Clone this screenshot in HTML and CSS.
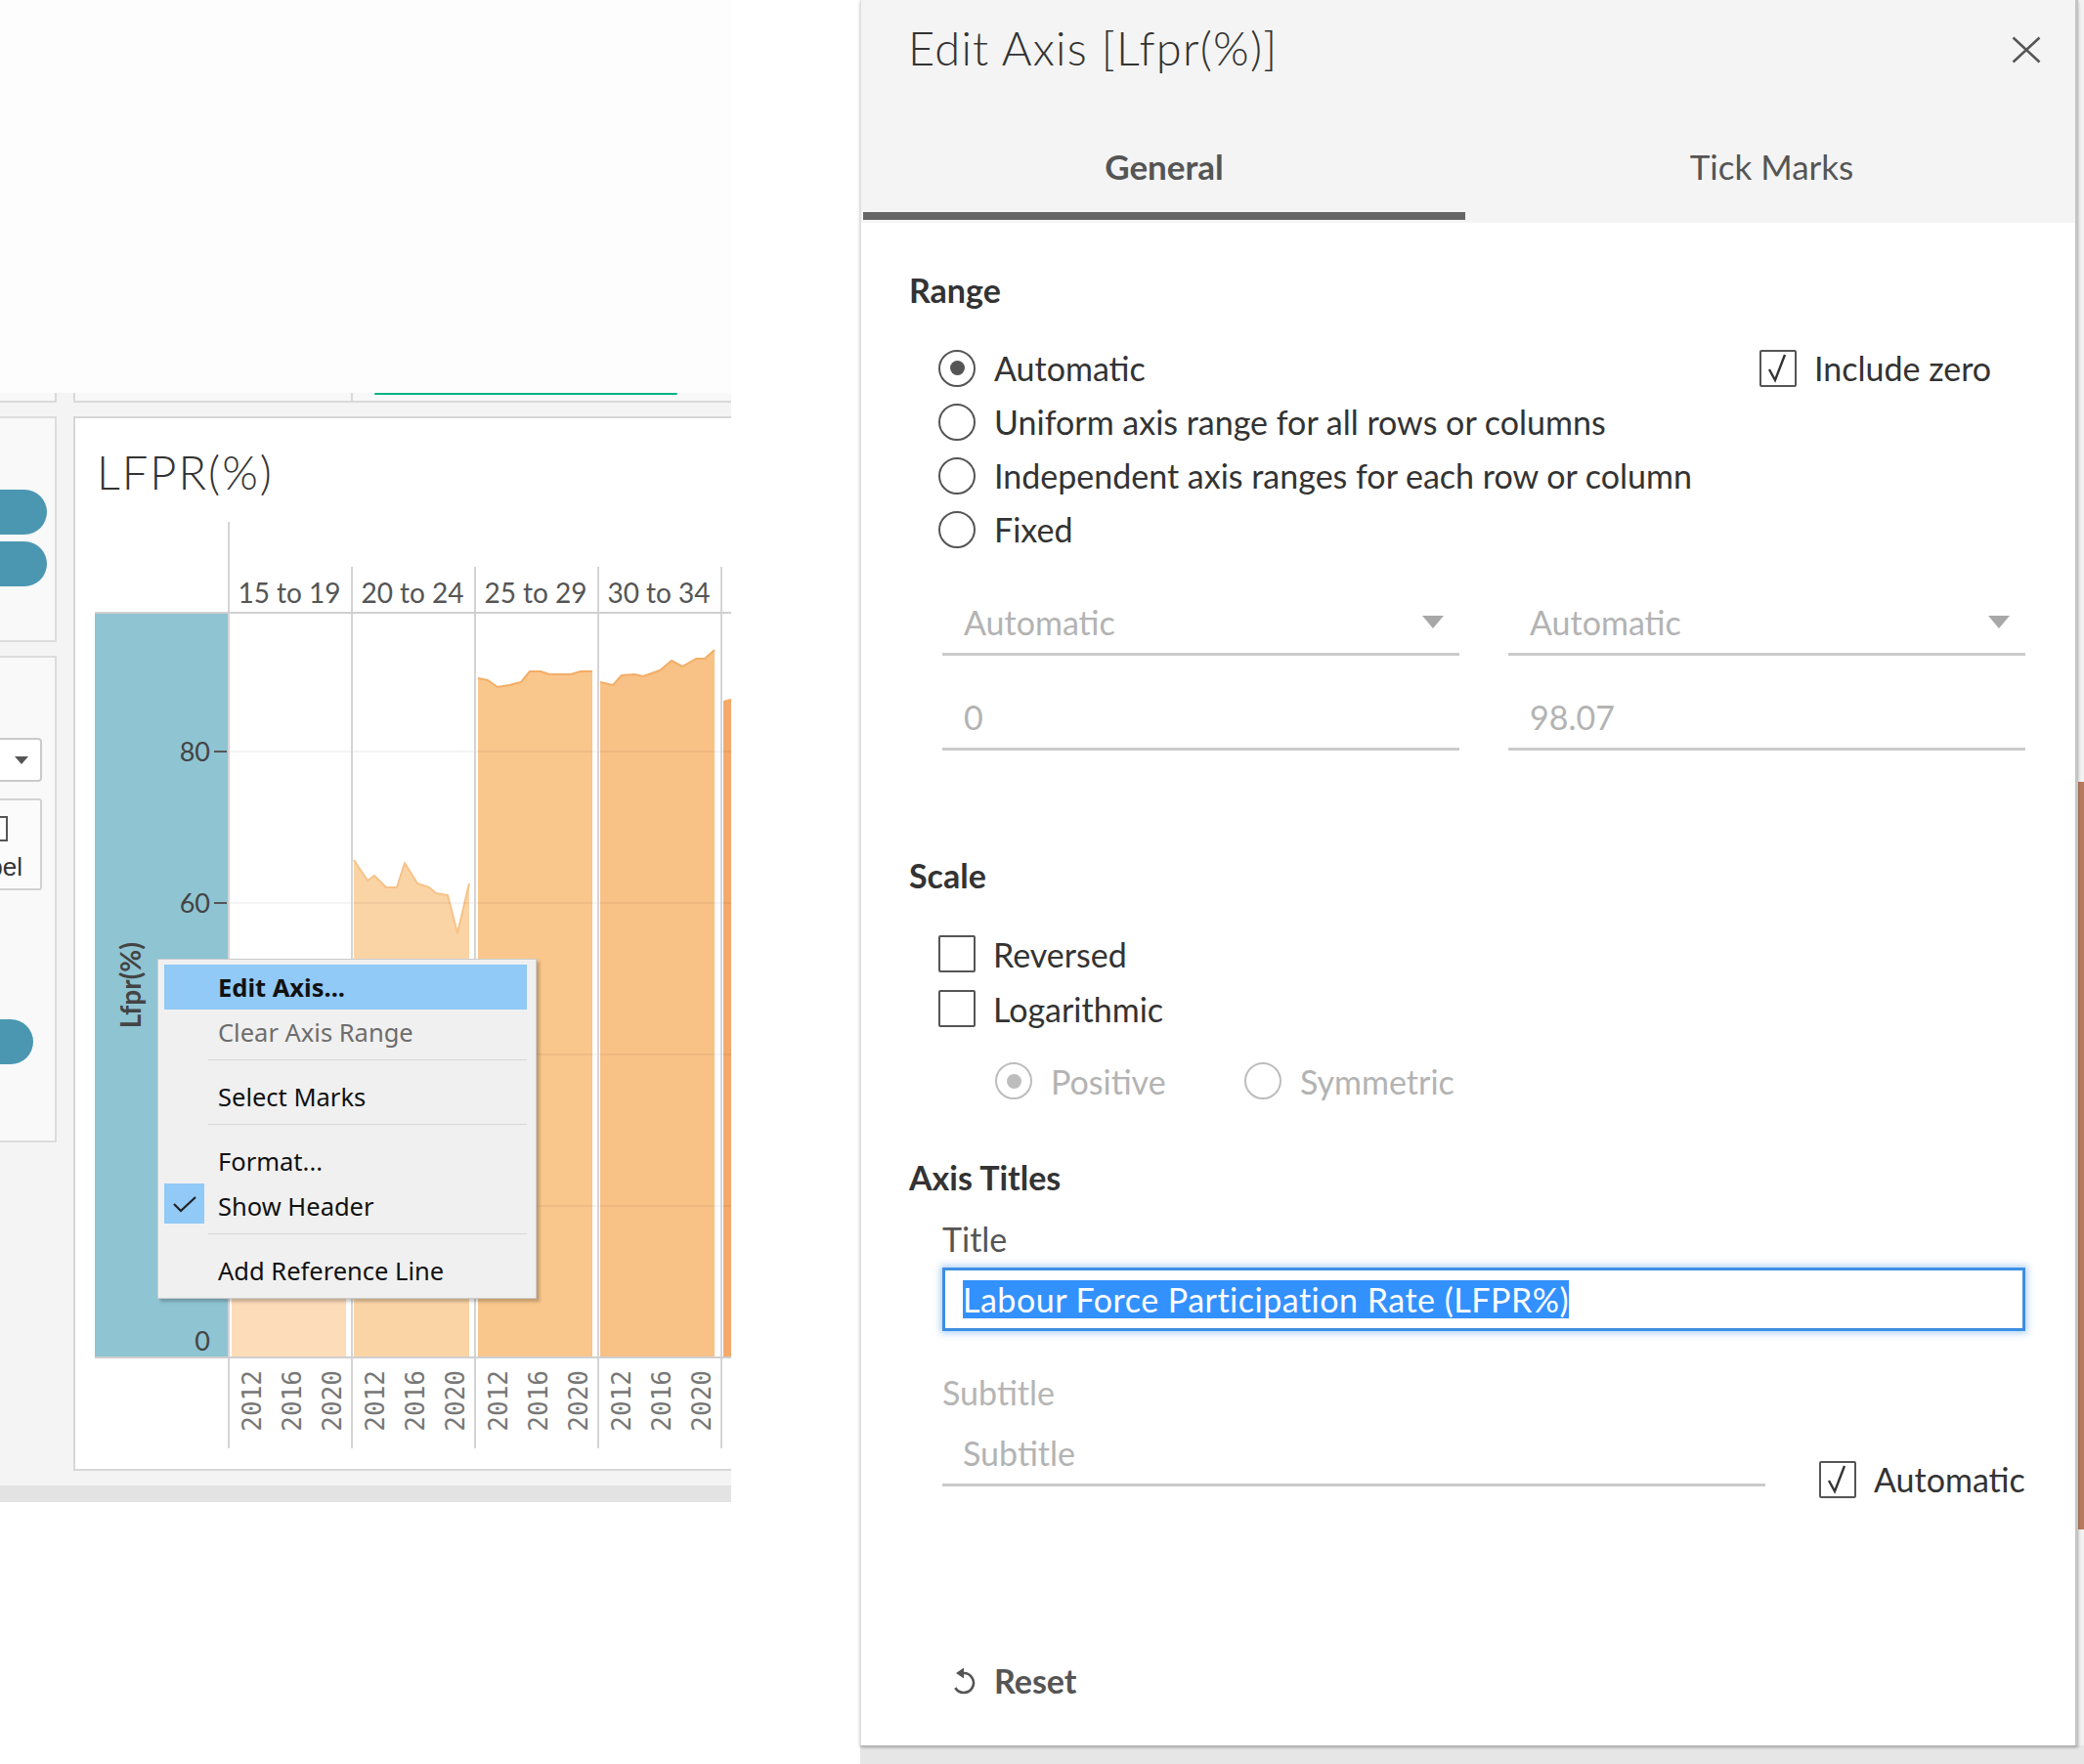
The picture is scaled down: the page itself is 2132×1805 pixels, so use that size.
FILE: index.html
```html
<!DOCTYPE html>
<html>
<head>
<meta charset="utf-8">
<title>Edit Axis</title>
<link rel="stylesheet" href="styles.css">
</head>
<body>
<div class="page">
  <div class="dash">
    <div class="dash-top"></div>
    <div class="top-cards">
      <div class="tc-a"></div>
      <div class="tc-b">
        <div class="tc-b1"></div>
        <div class="tc-b2"><div class="green-line"></div></div>
      </div>
    </div>
    <div class="dash-main">
      <div class="sidebar">
        <div class="side-card sc1">
          <div class="pill"></div>
          <div class="pill"></div>
        </div>
        <div class="side-card sc2">
          <div class="mini-dd"><span class="mini-caret"></span></div>
          <div class="mini-box">
            <div class="mini-cb"></div>
            <div class="mini-label">Label</div>
          </div>
          <div class="pill pill-short"></div>
        </div>
      </div>
      <div class="chart-panel">
        <div class="chart-title">LFPR(%)</div>
        <div class="chart-grid">
          <div class="h-axis"></div>
          <div class="h-col first"><span>15 to 19</span></div>
          <div class="h-col"><span>20 to 24</span></div>
          <div class="h-col"><span>25 to 29</span></div>
          <div class="h-col"><span>30 to 34</span></div>
          <div class="h-col"></div>

          <div class="p-axis">
            <div class="axis-title">Lfpr(%)</div>
            <div class="ticks">
              <div class="tick" style="top:141px"><span>80</span><i></i></div>
              <div class="tick" style="top:296px"><span>60</span><i></i></div>
              <div class="tick" style="top:451px"><span>40</span><i></i></div>
              <div class="tick" style="top:606px"><span>20</span><i></i></div>
              <div class="tick zero" style="top:742px"><span>0</span><i></i></div>
            </div>
          </div>
          <div class="p-col">
            <svg viewBox="0 0 124 760" preserveAspectRatio="none">
              <polygon class="a1" points="2,566 20,562 40,560 60,556 80,558 100,552 119,548 119,760 2,760"/>
              <polyline class="s1" points="2,566 20,562 40,560 60,556 80,558 100,552 119,548"/>
              <g class="grid"><line x1="0" y1="141" x2="124" y2="141"/><line x1="0" y1="296" x2="124" y2="296"/><line x1="0" y1="451" x2="124" y2="451"/><line x1="0" y1="606" x2="124" y2="606"/></g>
            </svg>
          </div>
          <div class="p-col">
            <svg viewBox="0 0 124 760" preserveAspectRatio="none">
              <polygon class="a2" points="1,252 15,273 22,268 34,280 45,280 53,255 66,276 78,280 85,286 97,288 107,327 119,276 119,760 1,760"/>
              <polyline class="s2" points="1,252 15,273 22,268 34,280 45,280 53,255 66,276 78,280 85,286 97,288 107,327 119,276"/>
              <g class="grid"><line x1="0" y1="141" x2="124" y2="141"/><line x1="0" y1="296" x2="124" y2="296"/><line x1="0" y1="451" x2="124" y2="451"/><line x1="0" y1="606" x2="124" y2="606"/></g>
            </svg>
          </div>
          <div class="p-col">
            <svg viewBox="0 0 124 760" preserveAspectRatio="none">
              <polygon class="a3" points="2,66 12,68 22,75 34,73 46,70 55,59 66,59 75,62 97,62 107,59 119,59 119,760 2,760"/>
              <polyline class="s3" points="2,66 12,68 22,75 34,73 46,70 55,59 66,59 75,62 97,62 107,59 119,59"/>
              <g class="grid"><line x1="0" y1="141" x2="124" y2="141"/><line x1="0" y1="296" x2="124" y2="296"/><line x1="0" y1="451" x2="124" y2="451"/><line x1="0" y1="606" x2="124" y2="606"/></g>
            </svg>
          </div>
          <div class="p-col">
            <svg viewBox="0 0 124 760" preserveAspectRatio="none">
              <polygon class="a4" points="1,70 14,73 23,63 36,62 45,64 62,58 74,48 85,54 99,46 108,46 118,37 118,760 1,760"/>
              <polyline class="s4" points="1,70 14,73 23,63 36,62 45,64 62,58 74,48 85,54 99,46 108,46 118,37"/>
              <g class="grid"><line x1="0" y1="141" x2="124" y2="141"/><line x1="0" y1="296" x2="124" y2="296"/><line x1="0" y1="451" x2="124" y2="451"/><line x1="0" y1="606" x2="124" y2="606"/></g>
            </svg>
          </div>
          <div class="p-col">
            <svg viewBox="0 0 124 760" preserveAspectRatio="none">
              <polygon class="a5" points="1,89 12,86 60,82 119,80 119,760 1,760"/>
              <g class="grid"><line x1="0" y1="141" x2="124" y2="141"/><line x1="0" y1="296" x2="124" y2="296"/><line x1="0" y1="451" x2="124" y2="451"/><line x1="0" y1="606" x2="124" y2="606"/></g>
            </svg>
          </div>

          <div class="y-axis"></div>
          <div class="y-col"><span>2012</span><span>2016</span><span>2020</span></div>
          <div class="y-col"><span>2012</span><span>2016</span><span>2020</span></div>
          <div class="y-col"><span>2012</span><span>2016</span><span>2020</span></div>
          <div class="y-col"><span>2012</span><span>2016</span><span>2020</span></div>
          <div class="y-col"></div>
        </div>

        <div class="ctx-menu">
          <div class="mi hl"><span class="gut"></span>Edit Axis...</div>
          <div class="mi dis"><span class="gut"></span>Clear Axis Range</div>
          <div class="sep"></div>
          <div class="mi"><span class="gut"></span>Select Marks</div>
          <div class="sep"></div>
          <div class="mi"><span class="gut"></span>Format...</div>
          <div class="mi"><span class="gut on"><svg viewBox="0 0 41 41"><path d="M10 21 L17 28 L32 14"/></svg></span>Show Header</div>
          <div class="sep"></div>
          <div class="mi"><span class="gut"></span>Add Reference Line</div>
        </div>
      </div>
    </div>
    <div class="dash-band"></div>
  </div>

  <div class="gap"></div>

  <div class="right">
    <div class="dlg-row">
      <div class="dialog">
        <div class="dlg-head">
          <div class="dlg-titlebar">
            <div class="dlg-title">Edit Axis [Lfpr(%)]</div>
            <svg class="close" viewBox="0 0 30 28"><path d="M1.5 1.5 L28.5 26.5 M28.5 1.5 L1.5 26.5"/></svg>
          </div>
          <div class="tabs">
            <div class="tab active">General</div>
            <div class="tab">Tick Marks</div>
          </div>
        </div>

        <div class="dlg-body">
          <div class="sec-h h-range">Range</div>
          <div class="opts">
            <div class="opt-row first">
              <div class="opt w840"><span class="radio on"></span>Automatic</div>
              <div class="opt"><span class="cbox"><svg viewBox="0 0 34 34"><path d="M8 18 L14 29 L24 3"/></svg></span>Include zero</div>
            </div>
            <div class="opt-row"><div class="opt"><span class="radio"></span>Uniform axis range for all rows or columns</div></div>
            <div class="opt-row"><div class="opt"><span class="radio"></span>Independent axis ranges for each row or column</div></div>
            <div class="opt-row"><div class="opt"><span class="radio"></span>Fixed</div></div>
          </div>

          <div class="fields">
            <div class="field dd"><span>Automatic</span><i class="dd-caret"></i></div>
            <div class="field dd"><span>Automatic</span><i class="dd-caret"></i></div>
            <div class="field"><span>0</span></div>
            <div class="field"><span>98.07</span></div>
          </div>

          <div class="sec-h h-scale">Scale</div>
          <div class="checks">
            <div class="opt-row chk"><div class="opt"><span class="cbox"></span>Reversed</div></div>
            <div class="opt-row chk"><div class="opt"><span class="cbox"></span>Logarithmic</div></div>
          </div>
          <div class="log-opts">
            <div class="opt dis w255"><span class="radio on"></span>Positive</div>
            <div class="opt dis"><span class="radio"></span>Symmetric</div>
          </div>

          <div class="sec-h h-titles">Axis Titles</div>
          <div class="lbl lbl-title">Title</div>
          <div class="title-input"><span class="sel">Labour Force Participation Rate (LFPR%)</span></div>
          <div class="lbl lbl-sub">Subtitle</div>
          <div class="sub-row">
            <div class="field sub-input"><span>Subtitle</span></div>
            <div class="opt auto-check"><span class="cbox"><svg viewBox="0 0 34 34"><path d="M8 18 L14 29 L24 3"/></svg></span>Automatic</div>
          </div>

          <div class="reset">
            <svg class="reset-ico" viewBox="0 0 24 32"><path class="arc" d="M12 9 A10 10 0 1 1 3.3 24"/><polygon points="4,9 12,3.5 12,14.5"/></svg>
            <span>Reset</span>
          </div>
        </div>
      </div>
      <div class="sliver"></div>
    </div>
    <div class="under"></div>
  </div>
</div>
</body>
</html>
```

FILE: styles.css
```css
* { box-sizing: border-box; }

body {
  margin: 0;
  width: 2132px;
  height: 1805px;
  overflow: hidden;
  background: #fff;
  font-family: "Lato", "Open Sans", sans-serif;
  color: #333;
}

.page {
  display: flex;
  height: 1805px;
}

/* ---------- left dashboard ---------- */
.dash {
  width: 748px;
  flex: none;
  display: flex;
  flex-direction: column;
  background: #fff;
}

.dash-top {
  height: 402px;
  background: #fdfdfd;
}

.top-cards {
  height: 10px;
  display: flex;
  background: #f4f4f4;
}

.tc-a {
  width: 58px;
  background: #f8f8f8;
  border-right: 2px solid #d9d9d9;
  border-bottom: 2px solid #d9d9d9;
}

.tc-b {
  margin-left: 17px;
  flex: 1;
  display: flex;
  background: #f8f8f8;
  border-left: 2px solid #d9d9d9;
  border-bottom: 2px solid #d9d9d9;
}

.tc-b1 {
  width: 284px;
  border-right: 2px solid #d9d9d9;
}

.tc-b2 { flex: 1; }

.green-line {
  margin-left: 22px;
  width: 310px;
  height: 2px;
  border-radius: 1px;
  background: #00b386;
}

.dash-main {
  height: 1108px;
  background: #f4f4f4;
  display: flex;
  padding: 14px 0 15px;
}

.sidebar {
  width: 58px;
  flex: none;
  display: flex;
  flex-direction: column;
  gap: 14px;
}

.side-card {
  background: #f9f9f9;
  border: 2px solid #dcdcdc;
  border-left: none;
  overflow: hidden;
}

.sc1 {
  height: 231px;
  padding-top: 73px;
  display: flex;
  flex-direction: column;
  gap: 7px;
}

.pill {
  width: 88px;
  height: 46px;
  margin-left: -40px;
  border-radius: 23px;
  background: #4b97b2;
  flex: none;
}

.pill-short {
  margin-left: -54px;
  margin-top: 132px;
}

.sc2 {
  height: 498px;
  padding-top: 82px;
  display: flex;
  flex-direction: column;
}

.mini-dd {
  width: 45px;
  height: 45px;
  margin-left: -2px;
  background: #fff;
  border: 2px solid #cacaca;
  border-radius: 0 4px 4px 0;
  display: flex;
  align-items: center;
  justify-content: center;
  padding-left: 2px;
}

.mini-caret {
  width: 0;
  height: 0;
  border-top: 8px solid #555;
  border-left: 7px solid transparent;
  border-right: 7px solid transparent;
}

.mini-box {
  width: 45px;
  height: 94px;
  margin-left: -2px;
  margin-top: 17px;
  background: #fbfbfb;
  border: 2px solid #d2d2d2;
  border-radius: 0 3px 3px 0;
  overflow: hidden;
}

.mini-cb {
  width: 22px;
  height: 26px;
  margin-left: -14px;
  margin-top: 16px;
  border: 2px solid #555;
  background: #fff;
}

.mini-label {
  margin-top: 13px;
  margin-left: -60px;
  width: 83px;
  text-align: right;
  font-family: "Liberation Sans", sans-serif;
  font-size: 26px;
  line-height: 26px;
  color: #333;
}

.dash-band {
  height: 17px;
  background: #e3e3e3;
}

/* ---------- chart panel ---------- */
.chart-panel {
  margin-left: 17px;
  flex: 1;
  background: #fff;
  border: 2px solid #d6d6d6;
  border-right: none;
  position: relative;
  overflow: hidden;
  padding-left: 20px;
}

.chart-title {
  margin-top: 27px;
  margin-left: 2px;
  font-size: 47px;
  font-weight: 300;
  letter-spacing: 2px;
  line-height: 56px;
  color: #333;
  white-space: nowrap;
}

.chart-grid {
  margin-top: 25px;
  display: grid;
  grid-template-columns: 136px repeat(5, 126px);
  grid-template-rows: 92px 762px 92px;
}

.h-axis {
  border-bottom: 2px solid #cfcfcf;
}

.h-col {
  position: relative;
  border-bottom: 2px solid #cfcfcf;
  display: flex;
  align-items: flex-end;
  justify-content: center;
  padding-bottom: 5px;
  font-size: 28px;
  line-height: 30px;
  color: #555;
  white-space: nowrap;
}

.h-col::before {
  content: "";
  position: absolute;
  left: 0;
  bottom: 0;
  width: 2px;
  height: 46px;
  background: #d4d4d4;
}

.h-col.first::before { height: 92px; }

.p-axis {
  background: #8fc4d3;
  border-bottom: 2px solid #cfcfcf;
  display: flex;
  align-items: center;
  padding-left: 21px;
}

.axis-title {
  writing-mode: vertical-rl;
  transform: rotate(180deg);
  font-size: 28px;
  font-weight: 700;
  line-height: 30px;
  color: #444;
  white-space: nowrap;
}

.ticks {
  position: relative;
  flex: 1;
  align-self: stretch;
}

.tick {
  position: absolute;
  right: 1px;
  transform: translateY(-50%);
  display: flex;
  align-items: center;
  gap: 4px;
  font-size: 27px;
  line-height: 30px;
  color: #444;
}

.tick i {
  display: block;
  width: 13px;
  height: 2px;
  background: #555;
}

.tick.zero { margin-top: 2px; }
.tick.zero i { visibility: hidden; }

.p-col {
  border-left: 2px solid #d4d4d4;
  border-bottom: 2px solid #cfcfcf;
}

.p-col svg {
  display: block;
  width: 124px;
  height: 760px;
}

.a1 { fill: #fddcb9; }
.a2 { fill: #fbd4a6; }
.a3 { fill: #f9c68c; }
.a4 { fill: #f8c186; }
.a5 { fill: #f5a96b; }

.s1, .s2, .s3, .s4 {
  fill: none;
  stroke-width: 2;
  stroke-linejoin: round;
}
.s1 { stroke: #fbcd9c; }
.s2 { stroke: #f8c287; }
.s3, .s4 { stroke: #f3ae66; }

.grid line {
  stroke: rgba(0, 0, 0, 0.06);
  stroke-width: 1.5;
}

.y-col {
  border-left: 2px solid #d4d4d4;
  display: flex;
  gap: 19px;
  padding: 12px 0 0 12px;
  align-items: flex-start;
}

.y-col span {
  writing-mode: vertical-rl;
  transform: rotate(180deg);
  font-family: "DejaVu Sans Mono", monospace;
  font-size: 26px;
  line-height: 22px;
  color: #777;
}

/* ---------- context menu ---------- */
.ctx-menu {
  position: absolute;
  left: 84px;
  top: 553px;
  width: 388px;
  background: #f0f0f0;
  border: 1px solid #cbcbcb;
  box-shadow: 3px 3px 3px rgba(0, 0, 0, 0.22);
  padding: 5px 0 5px;
  font-family: "Noto Sans", "Open Sans", sans-serif;
  font-size: 25.5px;
  color: #111;
}

.mi {
  height: 46px;
  margin: 0 9px 0 6px;
  display: flex;
  align-items: center;
  white-space: nowrap;
}

.mi.hl {
  background: #91c9f7;
  font-weight: 700;
}

.mi.dis { color: #6d6d6d; }

.gut {
  width: 41px;
  height: 41px;
  margin-right: 14px;
  align-self: flex-start;
  flex: none;
}

.gut.on { background: #91c9f7; }

.gut svg {
  display: block;
  width: 41px;
  height: 41px;
}

.gut path {
  fill: none;
  stroke: #222;
  stroke-width: 2.2;
}

.sep {
  height: 1px;
  background: #d7d7d7;
  margin: 5px 9px 14px 51px;
}

/* ---------- right side / dialog ---------- */
.gap {
  width: 132px;
  flex: none;
  background: #fff;
}

.right {
  flex: 1;
  display: flex;
  flex-direction: column;
}

.dlg-row {
  height: 1786px;
  display: flex;
  flex: none;
}

.dialog {
  flex: 1;
  background: #fff;
  border-left: 1px solid #e0e0e0;
  border-right: 3px solid #c4c4c4;
  box-shadow: 0 2px 3px rgba(0, 0, 0, 0.3);
  display: flex;
  flex-direction: column;
  position: relative;
  z-index: 1;
}

.sliver {
  width: 6px;
  flex: none;
  background: linear-gradient(to bottom, #f2f2f2 0, #f2f2f2 800px, #b97b5d 800px, #b97b5d 1565px, #f2f2f2 1565px);
}

.under {
  flex: 1;
  background: #e6e6e6;
}

.dlg-head {
  height: 228px;
  background: #f4f4f4;
  display: flex;
  flex-direction: column;
}

.dlg-titlebar {
  display: flex;
  justify-content: space-between;
  align-items: flex-start;
  padding: 21px 35px 0 48px;
}

.dlg-title {
  font-size: 47px;
  font-weight: 300;
  letter-spacing: 1.2px;
  line-height: 56px;
  color: #333;
  white-space: nowrap;
}

.close {
  width: 30px;
  height: 28px;
  margin-top: 16px;
}

.close path {
  stroke: #555;
  stroke-width: 2.5;
  fill: none;
}

.tabs {
  margin-top: auto;
  margin-bottom: 3px;
  display: grid;
  grid-template-columns: 1fr 1fr;
}

.tab {
  height: 85px;
  padding-top: 12px;
  text-align: center;
  font-size: 35px;
  line-height: 36px;
  color: #555;
  border-bottom: 8px solid transparent;
}

.tab.active {
  font-weight: 700;
  border-bottom-color: #666;
  margin: 0 3px 0 2px;
}

.dlg-body {
  padding: 0 51px 0 49px;
  display: flex;
  flex-direction: column;
}

.sec-h {
  height: 40px;
  line-height: 40px;
  font-size: 34px;
  font-weight: 700;
  color: #333;
}

.h-range { margin-top: 49px; }
.h-scale { margin-top: 108px; }
.h-titles { margin-top: 51px; }

.opts {
  margin-top: 32px;
  padding-left: 30px;
}

.opt-row {
  height: 55px;
  display: flex;
  align-items: center;
}

.opt-row.chk { height: 56px; }

.opt {
  display: flex;
  align-items: center;
  font-size: 34px;
  color: #333;
  white-space: nowrap;
}

.w840 { width: 840px; flex: none; }
.w255 { width: 255px; flex: none; }

.radio {
  width: 38px;
  height: 38px;
  border: 2.5px solid #555;
  border-radius: 50%;
  margin-right: 19px;
  display: flex;
  align-items: center;
  justify-content: center;
  flex: none;
}

.radio.on::after {
  content: "";
  width: 15px;
  height: 15px;
  border-radius: 50%;
  background: #555;
}

.cbox {
  width: 38px;
  height: 38px;
  border: 2px solid #555;
  border-radius: 2px;
  margin-right: 18px;
  flex: none;
}

.cbox svg {
  display: block;
  width: 34px;
  height: 34px;
}

.cbox path {
  fill: none;
  stroke: #333;
  stroke-width: 2.4;
  stroke-linejoin: miter;
}

.opt.dis { color: #b3b3b3; }
.opt.dis .radio { border-color: #bdbdbd; }
.opt.dis .radio.on::after { background: #bdbdbd; }

.fields {
  margin-top: 36px;
  margin-left: 34px;
  display: grid;
  grid-template-columns: 1fr 1fr;
  column-gap: 50px;
  row-gap: 31px;
}

.field {
  height: 66px;
  border-bottom: 3px solid #cbcbcb;
  padding-left: 22px;
  display: flex;
  align-items: center;
  font-size: 34px;
  color: #b3b3b3;
}

.field.dd {
  justify-content: space-between;
  padding-right: 16px;
}

.dd-caret {
  width: 0;
  height: 0;
  border-top: 13px solid #a8a8a8;
  border-left: 11px solid transparent;
  border-right: 11px solid transparent;
}

.checks {
  margin-top: 32px;
  padding-left: 30px;
}

.log-opts {
  margin-top: 18px;
  height: 56px;
  padding-left: 88px;
  display: flex;
  align-items: center;
}

.lbl {
  height: 36px;
  line-height: 36px;
  margin-left: 34px;
  font-size: 34px;
}

.lbl-title {
  margin-top: 25px;
  color: #555;
}

.lbl-sub {
  margin-top: 45px;
  color: #b5b5b5;
}

.title-input {
  margin-top: 11px;
  margin-left: 34px;
  height: 65px;
  border: 3px solid #3d8fe4;
  box-shadow: 0 0 7px 2px rgba(70, 150, 235, 0.45);
  padding-left: 18px;
  display: flex;
  align-items: center;
  background: #fff;
}

.sel {
  background: #3391fe;
  color: #fff;
  font-size: 34px;
  letter-spacing: 0.5px;
  line-height: 39px;
  white-space: nowrap;
}

.sub-row {
  margin-top: 12px;
  margin-left: 34px;
  display: flex;
  align-items: flex-start;
}

.sub-input {
  width: 842px;
  flex: none;
  padding-left: 21px;
}

.auto-check {
  margin-left: 55px;
  margin-top: 38px;
}

.reset {
  margin-top: 165px;
  height: 40px;
  padding-left: 44px;
  display: flex;
  align-items: center;
  font-size: 34px;
  font-weight: 700;
  color: #555;
}

.reset-ico {
  width: 24px;
  height: 32px;
  margin-right: 19px;
}

.reset-ico .arc {
  fill: none;
  stroke: #555;
  stroke-width: 2.6;
}

.reset-ico polygon { fill: #555; }
```
